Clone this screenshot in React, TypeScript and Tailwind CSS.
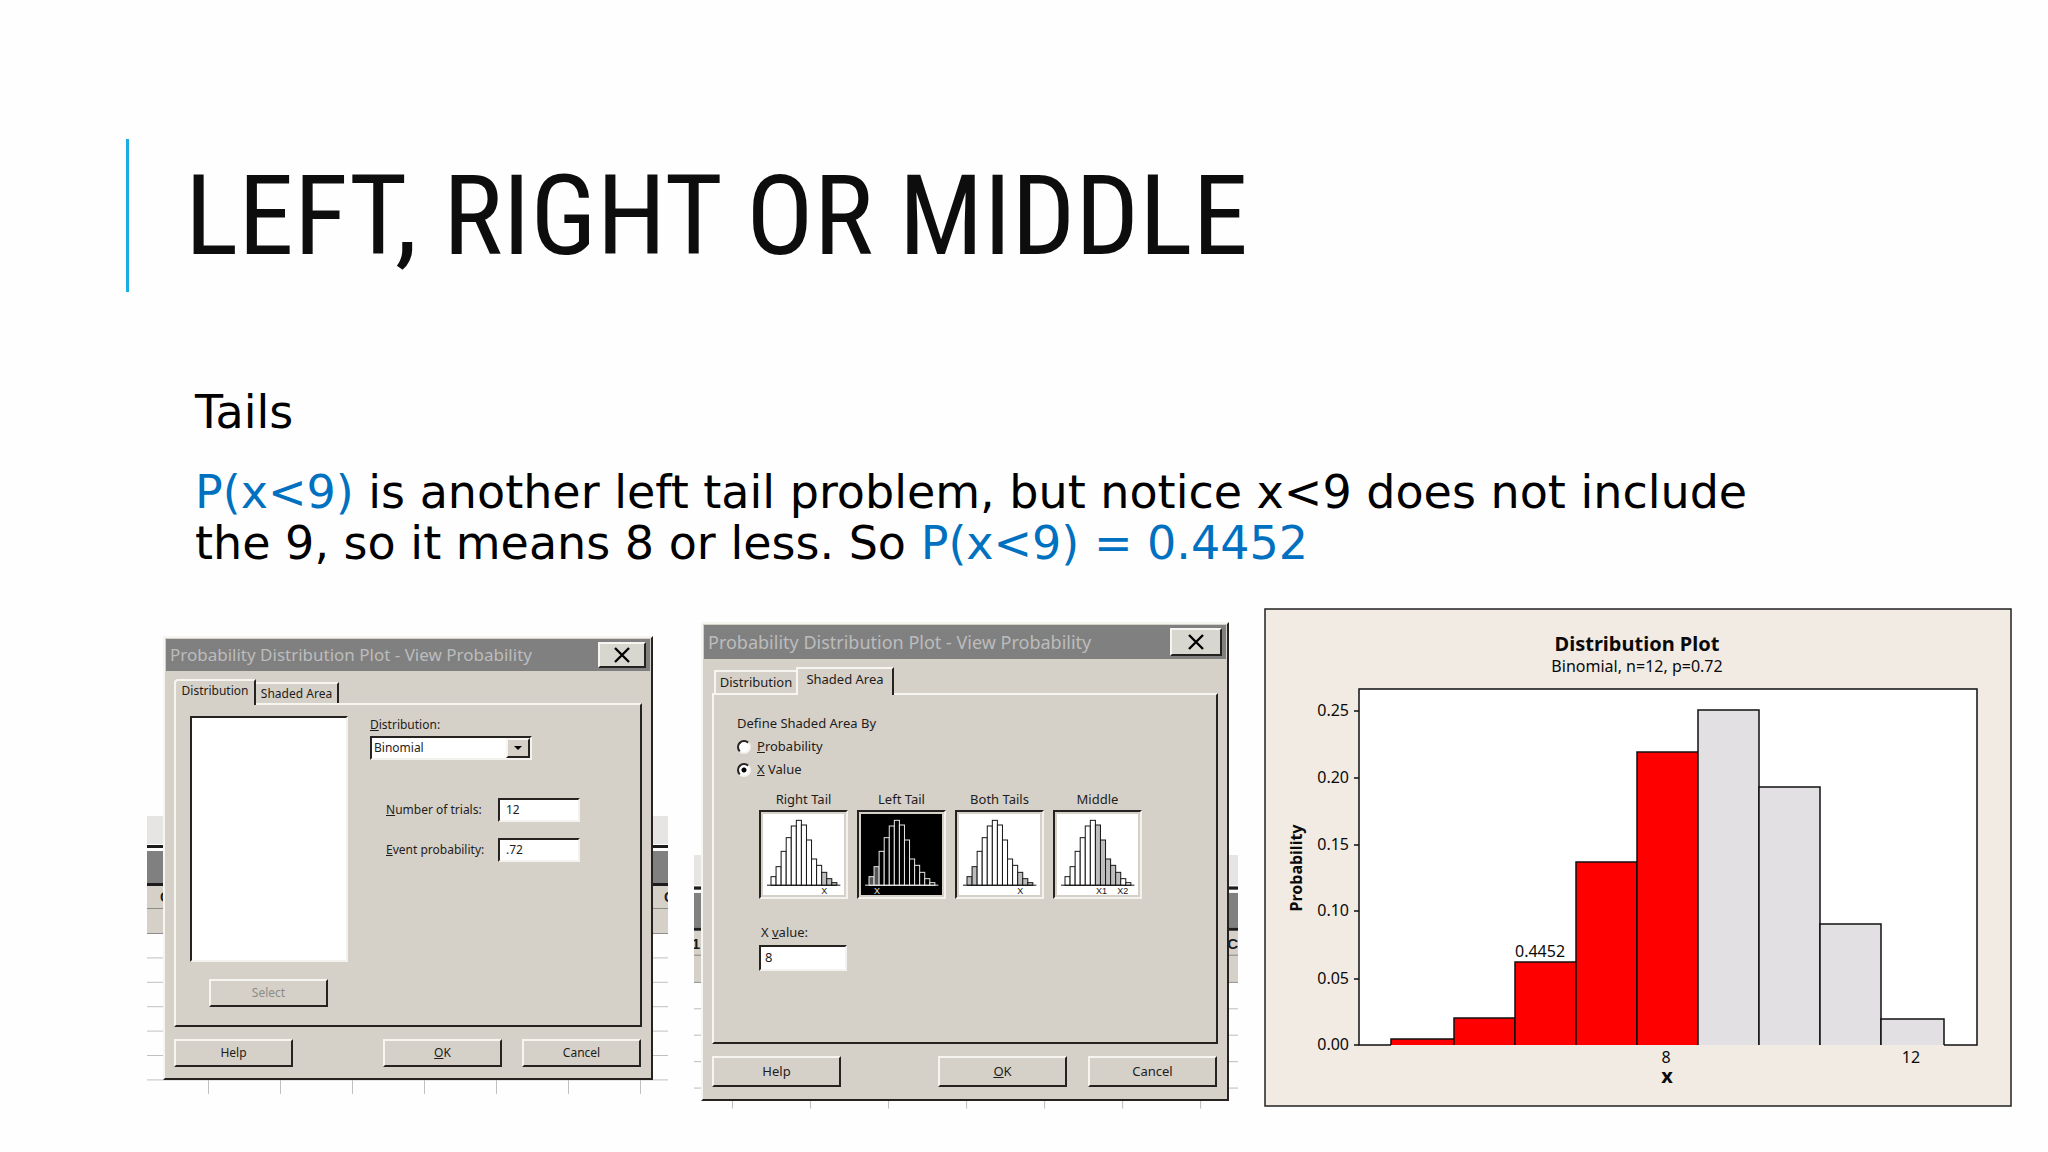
import { useState } from 'react';
import type { ReactNode } from 'react';

const raised = 'border-2 border-t-[#f6f5f0] border-l-[#f6f5f0] border-r-[#25221f] border-b-[#25221f]';
const sunken = 'border-2 border-t-[#25221f] border-l-[#25221f] border-r-[#f3f2ee] border-b-[#f3f2ee]';

// bar tops of the small histogram icons, drawn on a 270 x 270 grid
const thumbTops = [200, 170, 124, 83, 48, 31, 45, 90, 147, 166, 187, 206, 218];

const tails = [
	{ name: 'Right Tail', shaded: [10, 11, 12], marks: [{ x: 196, text: 'X' }] },
	{ name: 'Left Tail', shaded: [0, 1], marks: [{ x: 60, text: 'X' }] },
	{ name: 'Both Tails', shaded: [0, 1, 10, 11, 12], marks: [{ x: 196, text: 'X' }] },
	{ name: 'Middle', shaded: [6, 7, 8, 9, 10], marks: [{ x: 138, text: 'X1' }, { x: 202, text: 'X2' }] },
];

const chartBars = [
	{ x: 127, w: 63, y: 431, red: true },
	{ x: 190, w: 61, y: 410, red: true },
	{ x: 251, w: 61, y: 354, red: true },
	{ x: 312, w: 61, y: 254, red: true },
	{ x: 373, w: 61, y: 144, red: true },
	{ x: 434, w: 61, y: 102, red: false },
	{ x: 495, w: 61, y: 179, red: false },
	{ x: 556, w: 61, y: 316, red: false },
	{ x: 617, w: 63, y: 411, red: false },
];

const chartTicks = [
	{ label: '0.25', y: 103 },
	{ label: '0.20', y: 170 },
	{ label: '0.15', y: 237 },
	{ label: '0.10', y: 303 },
	{ label: '0.05', y: 371 },
	{ label: '0.00', y: 437 },
];

const Sheet = ({ width, height, firstTick, left, right }: { width: number; height: number; firstTick: number; left: ReactNode; right: ReactNode }) => (
	<svg viewBox={`0 0 ${width} ${height}`} className="absolute bottom-0 left-0 w-full" aria-hidden="true">
		<rect width={width} height="28" fill="#e6e5e3" />
		<rect y="29" width={width} height="3" fill="#1c1c1c" />
		<rect y="35" width={width} height="32" fill="#808080" />
		<rect y="67" width={width} height="3" fill="#1c1c1c" />
		<rect y="70" width={width} height="47" fill="#d5d1c9" />
		<rect y="92" width={width} height="1" fill="#8c8c8c" />
		<rect y="117" width={width} height="1" fill="#8c8c8c" />
		{[1, 2, 3, 4, 5, 6].map((n) => (
			<rect key={n} y={117 + n * 24.4} width={width} height="1" fill="#c0c0c0" />
		))}
		{[0, 1, 2, 3, 4, 5, 6].map((n) => (
			<rect key={n} x={firstTick + n * 72} y="200" width="1" height={height - 200} fill="#c0c0c0" />
		))}
		<g fontFamily="Liberation Sans" fontSize="14" fontWeight="bold" fill="#1c1c1c">
			{left}
			{right}
		</g>
	</svg>
);

const CloseButton = ({ className }: { className: string }) => (
	<button type="button" aria-label="Close" className={`flex items-center justify-center bg-[#d8d7cf] ${raised} ${className}`}>
		<svg viewBox="0 0 16 16" className="w-4 h-4" stroke="#000" strokeWidth="2.4">
			<path d="M1 1 L15 15 M15 1 L1 15" />
		</svg>
	</button>
);

const Thumb = ({ shaded, marks, selected }: { shaded: number[]; marks: { x: number; text: string }[]; selected: boolean }) => {
	const line = selected ? '#e8e8e8' : '#161616';
	const paper = selected ? '#000' : '#fff';
	const shade = selected ? '#555' : '#bdbdbd';
	return (
		<svg viewBox="0 0 255 255" className="w-full" aria-hidden="true">
			<rect width="255" height="255" fill="#d5d1c9" />
			<rect x="6" y="6" width="243" height="243" fill={paper} />
			{thumbTops.map((top, i) => (
				<rect
					key={i}
					x={30 + i * 15.2}
					y={top - 6}
					width="15.2"
					height={226 - top}
					fill={shaded.includes(i) ? shade : paper}
					stroke={line}
					strokeWidth="3"
				/>
			))}
			<rect x="18" y="218" width="220" height="3" fill={line} />
			{marks.map((m) => (
				<text key={m.text} x={m.x - 15} y="245" fontFamily="Liberation Sans" fontSize="27" fill={line}>
					{m.text}
				</text>
			))}
		</svg>
	);
};

const DistributionDialog = () => {
	const [distribution, setDistribution] = useState('Binomial');
	const [trials, setTrials] = useState('12');
	const [probability, setProbability] = useState('.72');

	return (
		<section className="relative mt-[29px] w-[521px] shrink-0 pl-4 pr-[15px] pb-[14px]">
			<Sheet
				width={521}
				height={278}
				firstTick={61}
				left={<text x="13" y="86">C</text>}
				right={<text x="517" y="86">C</text>}
			/>
			<div className={`relative bg-[#d5d1c9] text-xs text-[#1f1c1a] ${raised} p-px`}>
				<div className="flex h-8 items-center justify-between bg-[#808080] pl-1 pr-1">
					<h2 className="text-[17px] text-[#bcbcbc] whitespace-nowrap">Probability Distribution Plot - View Probability</h2>
					<CloseButton className="w-12 h-[26px]" />
				</div>
				<div className="px-2 pt-2">
					<div role="tablist" className="flex items-end">
						<button type="button" role="tab" aria-selected="true" className={`relative z-10 -mb-0.5 h-[26px] w-[82px] rounded-tl bg-[#d5d1c9] pb-1 ${raised} border-b-0`}>
							Distribution
						</button>
						<button type="button" role="tab" aria-selected="false" className={`h-[21px] w-[83px] ${raised} border-b-0 border-l-0 whitespace-nowrap`}>
							Shaded Area
						</button>
					</div>
					<div className={`flex h-[324px] ${raised}`}>
						<div className="pl-[14px] pt-[11px]">
							<div className={`h-[246px] w-[158px] bg-white ${sunken}`} />
							<button type="button" disabled className={`mt-[17px] ml-[19px] block h-7 w-[119px] text-[#8f8c86] ${raised}`}>
								Select
							</button>
						</div>
						<div className="pl-[22px] pt-3">
							<label htmlFor="distribution" className="block h-[18px] leading-4">
								<u>D</u>istribution:
							</label>
							<div className={`relative mt-px h-6 w-[162px] bg-white ${sunken}`}>
								<select
									id="distribution"
									value={distribution}
									onChange={(e) => setDistribution(e.target.value)}
									className="block h-full w-full appearance-none pl-0.5 outline-none"
								>
									<option>Binomial</option>
								</select>
								<span className={`pointer-events-none absolute right-0 top-0 flex h-5 w-6 items-center justify-center bg-[#d5d1c9] ${raised}`}>
									<svg viewBox="0 0 8 4" className="w-2 h-1">
										<path d="M0 0 H8 L4 4 Z" />
									</svg>
								</span>
							</div>
							<div className="mt-[38px] flex items-center pl-4">
								<label htmlFor="trials" className="w-28">
									<u>N</u>umber of trials:
								</label>
								<input
									id="trials"
									value={trials}
									onChange={(e) => setTrials(e.target.value)}
									className={`h-6 w-[82px] bg-white pb-0.5 pl-1.5 outline-none ${sunken}`}
								/>
							</div>
							<div className="mt-4 flex items-center pl-4">
								<label htmlFor="event" className="w-28">
									<u>E</u>vent probability:
								</label>
								<input
									id="event"
									value={probability}
									onChange={(e) => setProbability(e.target.value)}
									className={`h-6 w-[82px] bg-white pb-0.5 pl-1.5 outline-none ${sunken}`}
								/>
							</div>
						</div>
					</div>
				</div>
				<div className="flex pl-2 pr-[9px] pt-3 pb-[10px]">
					<button type="button" className={`h-7 w-[119px] ${raised}`}>Help</button>
					<button type="button" className={`ml-auto h-7 w-[119px] ${raised}`}><u>O</u>K</button>
					<button type="button" className={`ml-5 h-7 w-[119px] ${raised}`}>Cancel</button>
				</div>
			</div>
		</section>
	);
};

const radioClass =
	'h-[14px] w-[14px] appearance-none rounded-full border-2 border-t-[#25221f] border-l-[#25221f] border-r-[#f3f2ee] border-b-[#f3f2ee] bg-white checked:bg-[radial-gradient(circle,#000_2px,#fff_3px)]';

const ShadedAreaDialog = () => {
	const [by, setBy] = useState('x');
	const [tail, setTail] = useState('Left Tail');
	const [value, setValue] = useState('8');

	return (
		<section className="relative mt-[15px] w-[544px] shrink-0 pl-[7px] pr-[9px] pb-2">
			<Sheet
				width={502}
				height={234}
				firstTick={35}
				left={<text x="-2" y="87">1</text>}
				right={<text x="492" y="87">C2</text>}
			/>
			<div className={`relative bg-[#d5d1c9] text-[13px] text-[#1f1c1a] ${raised} p-px`}>
				<div className="flex h-[34px] items-center justify-between bg-[#808080] px-1">
					<h2 className="text-lg text-[#bcbcbc] whitespace-nowrap">Probability Distribution Plot - View Probability</h2>
					<CloseButton className="w-[52px] h-7" />
				</div>
				<div className="px-2 pt-2">
					<div role="tablist" className="flex items-end pl-0.5">
						<button type="button" role="tab" aria-selected="false" className={`h-[23px] w-[82px] ${raised} border-b-0 border-r-0 whitespace-nowrap`}>
							Distribution
						</button>
						<button type="button" role="tab" aria-selected="true" className={`relative z-10 -mb-0.5 h-7 w-[98px] bg-[#d5d1c9] pb-1 ${raised} border-b-0 whitespace-nowrap`}>
							Shaded Area
						</button>
					</div>
					<div className={`h-[351px] pl-[23px] pt-[18px] ${raised}`}>
						<fieldset>
							<legend className="leading-5">Define Shaded Area By</legend>
							<label className="mt-1 flex h-5 items-center gap-1.5">
								<input type="radio" name="by" checked={by === 'p'} onChange={() => setBy('p')} className={radioClass} />
								<span><u>P</u>robability</span>
							</label>
							<label className="mt-[3px] flex h-5 items-center gap-1.5">
								<input type="radio" name="by" checked={by === 'x'} onChange={() => setBy('x')} className={radioClass} />
								<span><u>X</u> Value</span>
							</label>
						</fieldset>
						<div className="mt-[9px] flex gap-[9px] pl-[22px]">
							{tails.map((t) => (
								<button key={t.name} type="button" onClick={() => setTail(t.name)} className="w-[89px]">
									<span className="block h-[21px] leading-5">{t.name}</span>
									<span className={`block h-[89px] ${sunken}`}>
										<Thumb shaded={t.shaded} marks={t.marks} selected={tail === t.name} />
									</span>
								</button>
							))}
						</div>
						<div className="mt-[23px] pl-[22px]">
							<label htmlFor="xvalue" className="block h-[23px] pl-0.5 leading-5">
								X <u>v</u>alue:
							</label>
							<input
								id="xvalue"
								value={value}
								onChange={(e) => setValue(e.target.value)}
								className={`block h-[26px] w-[88px] bg-white pb-0.5 pl-1 outline-none ${sunken}`}
							/>
						</div>
					</div>
				</div>
				<div className="flex pl-2 pr-[9px] pt-3 pb-[11px]">
					<button type="button" className={`h-[31px] w-[129px] ${raised}`}>Help</button>
					<button type="button" className={`ml-auto h-[31px] w-[129px] ${raised}`}><u>O</u>K</button>
					<button type="button" className={`ml-[21px] h-[31px] w-[129px] ${raised}`}>Cancel</button>
				</div>
			</div>
		</section>
	);
};

const DistributionPlot = () => (
	<section className="min-w-0 flex-1 pt-px">
		<svg viewBox="0 0 748 499" className="block w-full" fontFamily="Noto Sans, sans-serif" fontSize="16" fill="#0a0a0a" role="img" aria-label="Distribution Plot">
			<rect x="1" y="1" width="746" height="497" fill="#f2ebe4" stroke="#222" strokeWidth="1.5" />
			<text x="373" y="43" textAnchor="middle" fontSize="20" fontWeight="bold">Distribution Plot</text>
			<text x="373" y="64" textAnchor="middle">Binomial, n=12, p=0.72</text>
			<rect x="95" y="81" width="618" height="356" fill="#fff" />
			<path d="M127 437 H95 V81 H713 V437 H680" fill="none" stroke="#111" strokeWidth="1.5" />
			{chartTicks.map((t) => (
				<g key={t.label}>
					<path d={`M90 ${t.y} H95`} stroke="#111" strokeWidth="1.5" />
					<text x="85" y={t.y + 5} textAnchor="end">{t.label}</text>
				</g>
			))}
			{chartBars.map((b) => (
				<g key={b.x}>
					<rect x={b.x} y={b.y} width={b.w} height={437 - b.y} fill={b.red ? '#ff0000' : '#e3e0e3'} />
					<path d={`M${b.x} 437 V${b.y} H${b.x + b.w} V437`} fill="none" stroke="#111" strokeWidth="1.5" />
				</g>
			))}
			<text x="251" y="349">0.4452</text>
			<text x="402" y="455" textAnchor="middle">8</text>
			<text x="647" y="455" textAnchor="middle">12</text>
			<text x="403" y="475" textAnchor="middle" fontSize="20" fontWeight="bold">x</text>
			<text transform="translate(38 260) rotate(-90)" textAnchor="middle" fontWeight="bold">Probability</text>
		</svg>
	</section>
);

const App = () => {
	return (
		<main className="min-h-screen bg-[#fefefe] pt-[139px] pb-11 font-['Noto_Sans',sans-serif]">
			<header className="ml-[126px] border-l-[3px] border-[#1cade4] pl-14">
				<h1 className="py-4 font-['Roboto_Condensed','Arial_Narrow','Liberation_Sans',sans-serif] text-[112px] leading-[121px] text-[#0d0d0d]">LEFT, RIGHT OR MIDDLE</h1>
			</header>
			<div className="mt-[95px] ml-[195px] mr-[280px] font-['DejaVu_Sans',sans-serif] text-[46px] leading-[51px] text-black">
				<p>Tails</p>
				<p className="mt-[29px]">
					<span className="text-[#0070c0]">P(x&lt;9)</span> is another left tail problem, but notice x&lt;9 does not include the 9, so it means 8 or less. So{' '}
					<span className="text-[#0070c0]">P(x&lt;9) = 0.4452</span>
				</p>
			</div>
			<div className="mt-[38px] flex items-start gap-[26px] pl-[147px] pr-9">
				<DistributionDialog />
				<ShadedAreaDialog />
				<DistributionPlot />
			</div>
		</main>
	);
};

export default App;
